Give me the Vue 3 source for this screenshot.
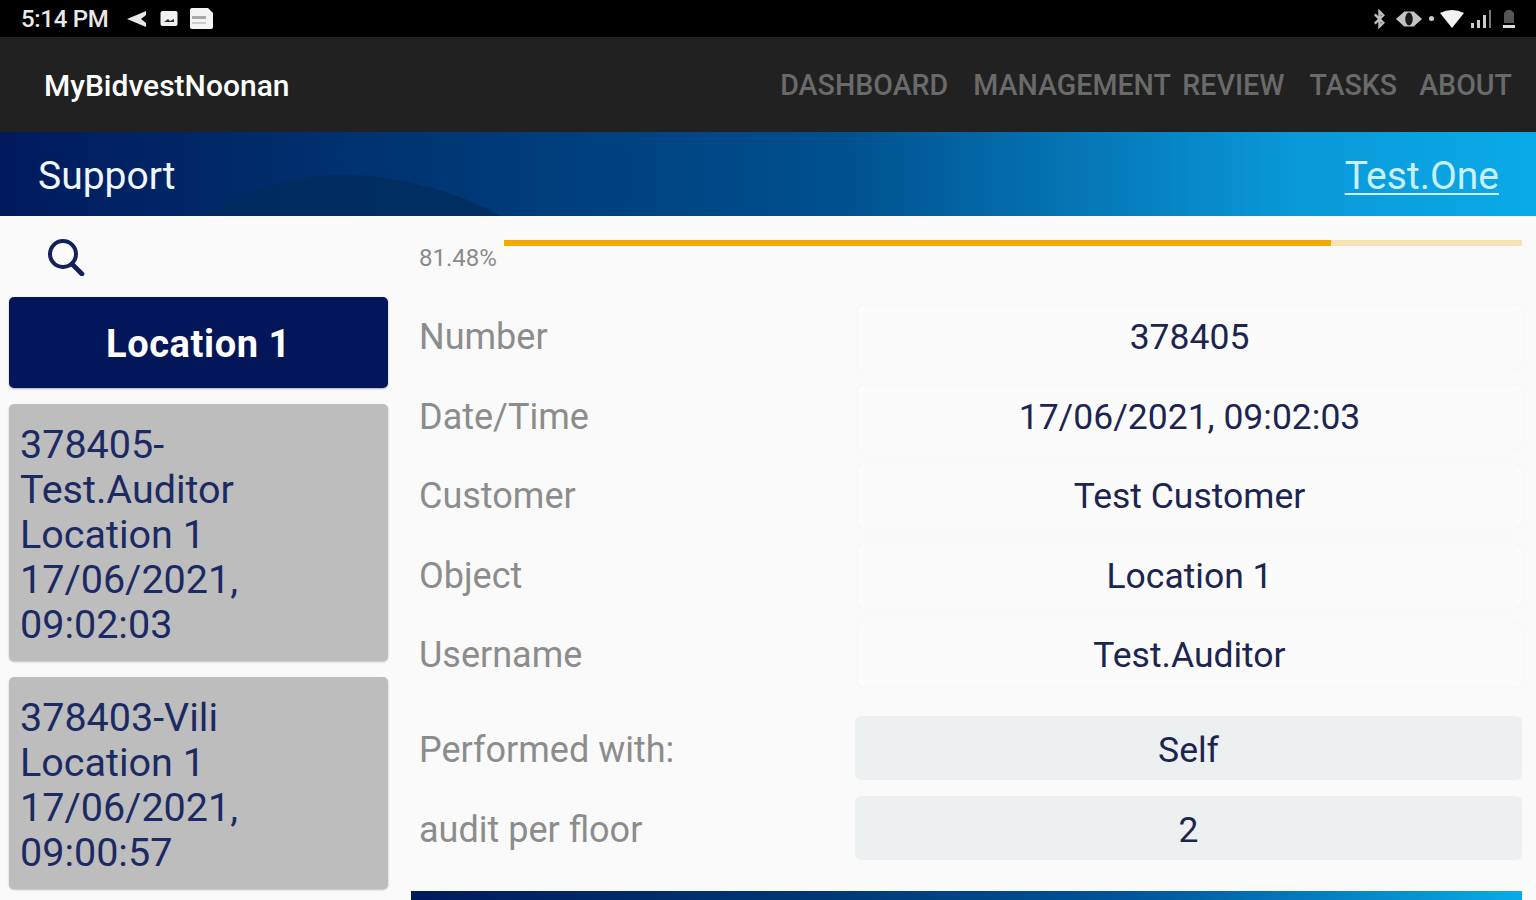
<script setup>
const items = [
  { id: 1, lines: ['378405-', 'Test.Auditor', 'Location 1', '17/06/2021,', '09:02:03'], h: 257 },
  { id: 2, lines: ['378403-Vili', 'Location 1', '17/06/2021,', '09:00:57'], h: 212 }
]
const rows = [
  ['Number', '378405'],
  ['Date/Time', '17/06/2021, 09:02:03'],
  ['Customer', 'Test Customer'],
  ['Object', 'Location 1'],
  ['Username', 'Test.Auditor']
]
const inputs = [
  ['Performed with:', 'Self'],
  ['audit per floor', '2']
]
const nav = ['DASHBOARD', 'MANAGEMENT REVIEW', 'TASKS', 'ABOUT']
</script>

<template>
  <div class="screen">
    <div class="status">
      <div class="status-left">
        <span class="time">5:14 PM</span>
        <svg class="ic a" width="22" height="18" viewBox="0 0 22 18"><path d="M1 9 L13 4 L20 1 L20 5 L15 9 L20 13 L20 17 L13 14 Z" fill="#e8e8e8"/></svg>
        <svg class="ic b" width="18" height="17" viewBox="0 0 18 17"><rect x="0.5" y="1" width="17" height="15" rx="2" fill="#f0f0f0"/><path d="M4 12 L8 9 L10 11 L14 9 L14 12 Z" fill="#333"/></svg>
        <svg class="ic" width="25" height="23" viewBox="0 0 25 23"><path d="M1 3 Q1 1 3 1 L19 1 L24 6 L24 20 Q24 22 22 22 L3 22 Q1 22 1 20 Z" fill="#f4f4f4"/><rect x="3" y="9" width="14" height="3" fill="#aaa"/><rect x="3" y="15" width="14" height="2" fill="#ccc"/></svg>
      </div>
      <div class="status-right">
        <svg class="bt" width="15" height="20" viewBox="0 0 16 20"><path d="M3 5 L12 14 L8 18 L8 2 L12 6 L3 15" fill="none" stroke="#bdbdbd" stroke-width="2.6"/></svg>
        <svg width="28" height="20" viewBox="0 0 30 20"><path d="M1 10 L10 2 L20 2 L29 10 L20 18 L10 18 Z" fill="#c4c4c4"/><ellipse cx="15" cy="10" rx="4" ry="7" fill="#1a1a1a"/></svg>
        <span class="dot"></span>
        <svg width="24" height="18" viewBox="0 0 24 18"><path d="M0 3 Q12 -3 24 3 L12 18 Z" fill="#f2f2f2"/></svg>
        <svg width="22" height="20" viewBox="0 0 22 20"><rect x="1" y="14" width="3" height="5" fill="#ccc"/><rect x="7" y="11" width="3" height="8" fill="#ccc"/><rect x="13" y="6" width="3" height="13" fill="#ccc"/><rect x="19" y="1" width="2" height="18" fill="#777"/></svg>
        <svg class="batt" width="14" height="22" viewBox="0 0 14 22"><path d="M2 15 L2 5 L5 2 L9 2 L12 5 L12 15 Z" fill="#555"/><rect x="1" y="17" width="12" height="3" fill="#ddd"/></svg>
      </div>
    </div>

    <div class="navbar">
      <span class="brand">MyBidvestNoonan</span>
      <nav class="links">
        <span v-for="n in nav" :key="n">{{ n }}</span>
      </nav>
    </div>

    <div class="banner">
      <svg class="swoosh" width="560" height="84" viewBox="0 0 560 84" preserveAspectRatio="none"><path d="M200 84 Q280 36 370 44 Q450 54 500 84 Z" fill="#002c5e" opacity="0.8"/></svg>
      <span class="title">Support</span>
      <a class="user">Test.One</a>
    </div>

    <div class="content">
      <aside class="side">
        <div class="search">
          <svg width="40" height="38" viewBox="0 0 40 38"><circle cx="17" cy="16" r="13" fill="none" stroke="#14205a" stroke-width="4"/><path d="M26 26 L36 36" stroke="#14205a" stroke-width="4.6" stroke-linecap="round"/></svg>
        </div>
        <div class="loc">Location 1</div>
        <div v-for="it in items" :key="it.id" class="card" :style="{ height: it.h + 'px' }">
          <div v-for="l in it.lines" :key="l">{{ l }}</div>
        </div>
      </aside>

      <main class="main">
        <div class="progress">
          <span class="pct">81.48%</span>
          <div class="track"><div class="fill"></div></div>
        </div>
        <div class="rows">
          <div v-for="r in rows" :key="r[0]" class="row">
            <span class="lbl">{{ r[0] }}</span>
            <div class="val">{{ r[1] }}</div>
          </div>
        </div>
        <div class="inputs">
          <div v-for="r in inputs" :key="r[0]" class="row">
            <span class="lbl">{{ r[0] }}</span>
            <div class="val filled">{{ r[1] }}</div>
          </div>
        </div>
        <div class="bottom"></div>
      </main>
    </div>
  </div>
</template>

<style>
html, body { margin: 0; background: #fafafa; overflow: hidden; }
</style>

<style scoped>
.screen {
  width: 1536px;
  height: 900px;
  overflow: hidden;
  background: #fafafa;
  font-family: Roboto, "Liberation Sans", sans-serif;
  display: flex;
  flex-direction: column;
}
.status {
  height: 37px;
  background: #000;
  display: flex;
  align-items: center;
  justify-content: space-between;
  padding: 0 20px 0 21px;
  flex: none;
}
.status-left, .status-right { display: flex; align-items: center; }
.time { color: #e8e8e8; font-size: 24px; font-weight: 500; margin-right: 18px; letter-spacing: -0.3px; }
.status-left .ic { margin-right: 12px; }
.status-left .ic.b { margin-right: 11px; }
.status-right { gap: 6px; }
.bt { margin-right: 2px; }
.batt { margin-left: 4px; }
.dot { width: 5px; height: 5px; background: #ccc; border-radius: 50%; }
.navbar {
  height: 95px;
  background: #212121;
  display: flex;
  align-items: center;
  justify-content: space-between;
  padding: 0 24px 0 44px;
  flex: none;
}
.brand { color: #fff; font-size: 30px; font-weight: 500; padding-top: 2px; }
.links { display: flex; gap: 25px; color: #6a6a6a; font-size: 28.6px; font-weight: 500; word-spacing: 5px; }
.links span:last-child { margin-left: -3px; }
.banner {
  position: relative;
  height: 84px;
  flex: none;
  background: linear-gradient(90deg, #001a5c 0%, #003a78 32%, #00508f 55%, #0a98d8 84%, #0aaae8 100%);
  display: flex;
  align-items: center;
  justify-content: space-between;
  padding: 4px 37px 0 38px;
  box-sizing: border-box;
  color: #eef6ff;
}
.swoosh { position: absolute; left: 0; top: 0; }
.title { position: relative; font-size: 39px; }
.user { position: relative; font-size: 39px; color: #c8f0ff; text-decoration: underline; text-underline-offset: 4px; text-decoration-thickness: 2px; }
.content { flex: 1; display: flex; min-height: 0; }
.side { width: 379px; margin-left: 9px; flex: none; }
.search { height: 81px; padding-left: 37px; display: flex; align-items: center; box-sizing: border-box; }
.loc {
  height: 91px;
  background: #03165a;
  border-radius: 5px;
  color: #fff;
  font-size: 38px;
  letter-spacing: 0.6px;
  font-weight: 700;
  display: flex;
  align-items: center;
  justify-content: center;
  padding-top: 3px;
  box-sizing: border-box;
  box-shadow: 0 1px 2px rgba(0,0,0,.3);
}
.card {
  margin-top: 16px;
  box-sizing: border-box;
  background: #bdbdbd;
  border-radius: 5px;
  padding: 18px 11px;
  color: #1c2a64;
  font-size: 39.5px;
  line-height: 45px;
  box-shadow: 0 1px 2px rgba(0,0,0,.25);
}
.main { margin-left: 23px; width: 1111px; flex: none; display: flex; flex-direction: column; }
.progress { height: 89px; flex: none; position: relative; }
.pct { position: absolute; left: 8px; top: 28px; font-size: 24px; color: #8a8a8a; }
.track { position: absolute; left: 93px; right: 0; top: 24px; height: 6px; background: #f6e3b4; }
.fill { width: 81.2%; height: 100%; background: #f0ab00; }
.row { display: flex; align-items: center; }
.lbl { flex: none; padding-left: 8px; box-sizing: border-box; font-size: 36px; color: #8c8c8c; }
.val {
  flex: 1;
  text-align: center;
  color: #1b2550;
  font-size: 35.5px;
}
.rows .lbl { width: 446px; }
.rows .row { height: 64px; margin-bottom: 15.5px; }
.rows .val {
  height: 64px;
  line-height: 64px;
  border-radius: 6px;
  box-shadow: 0 0 1px rgba(0,0,0,.1);
  background: #fbfbfb;
}
.inputs { margin-top: 13.5px; }
.inputs .lbl { width: 444px; padding-top: 4px; }
.inputs .row { height: 64px; margin-bottom: 16px; }
.filled {
  height: 64px;
  line-height: 68px;
  background: #ecf0f1;
  border-radius: 6px;
}
.bottom {
  height: 20px;
  margin-top: 15px;
  flex: none;
  background: linear-gradient(90deg, #001a5c 0%, #003a78 40%, #00559a 65%, #0aaae8 100%);
}
</style>
